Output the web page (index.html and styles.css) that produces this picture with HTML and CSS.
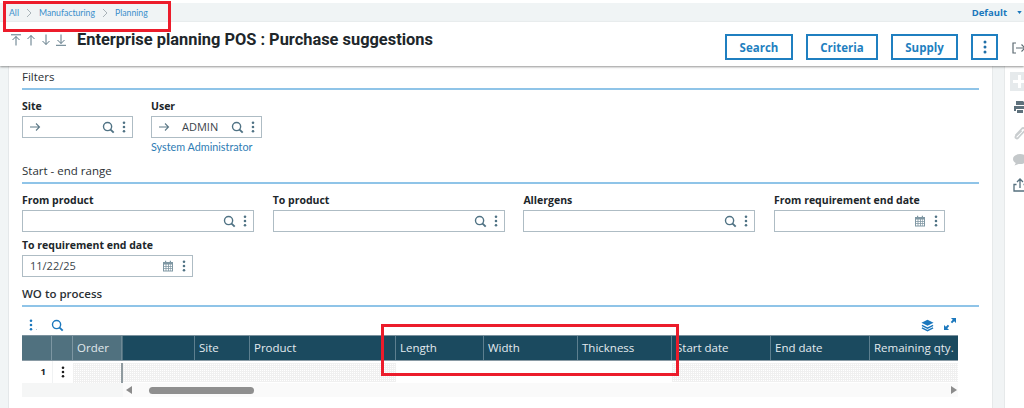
FILE: index.html
```html
<!DOCTYPE html>
<html lang="en">
<head>
<meta charset="utf-8">
<title>Enterprise planning POS : Purchase suggestions</title>
<link rel="stylesheet" href="styles.css">
</head>
<body>
<svg class="defs" width="0" height="0" aria-hidden="true">
  <symbol id="i-search" viewBox="0 0 14 14"><circle cx="6" cy="6" r="4.4" fill="none" stroke="currentColor" stroke-width="1.5"/><path d="M9.2 9.2 12.6 12.6" stroke="currentColor" stroke-width="2" fill="none"/></symbol>
  <symbol id="i-dots" viewBox="0 0 4 14"><circle cx="2" cy="2" r="1.5" fill="currentColor"/><circle cx="2" cy="7" r="1.5" fill="currentColor"/><circle cx="2" cy="12" r="1.5" fill="currentColor"/></symbol>
  <symbol id="i-arrow" viewBox="0 0 12 10"><path d="M1 5H10.5M7 1.5 10.5 5 7 8.5" fill="none" stroke="currentColor" stroke-width="1.1"/></symbol>
  <symbol id="i-cal" viewBox="0 0 12 12"><path fill="currentColor" d="M1 2h2V.8h1.2V2h3.6V.8H9V2h2v9.5H1zM2 4.6v1.4h1.6V4.6zm2.4 0v1.4H6V4.6zm2.4 0v1.4h1.6V4.6zm2.2 0v1.4H10V4.6zM2 6.8v1.4h1.6V6.8zm2.4 0v1.4H6V6.8zm2.4 0v1.4h1.6V6.8zm2.2 0v1.4H10V6.8zM2 9v1.4h1.6V9zm2.4 0v1.4H6V9zm2.4 0v1.4h1.6V9zM9 9v1.4h1V9z"/></symbol>
</svg>

<div class="topbar">
  <nav class="crumbs">
    <a>All</a>
    <svg class="chev" viewBox="0 0 6 10"><path d="M1 1 5 5 1 9" fill="none" stroke="currentColor"/></svg>
    <a>Manufacturing</a>
    <svg class="chev" viewBox="0 0 6 10"><path d="M1 1 5 5 1 9" fill="none" stroke="currentColor"/></svg>
    <a>Planning</a>
  </nav>
  <div class="default-menu"><span>Default</span><svg class="caret" viewBox="0 0 6 4"><path d="M0 0H6L3 4z" fill="currentColor"/></svg></div>
</div>

<header class="header">
  <div class="nav-arrows">
    <svg viewBox="0 0 10 12"><path d="M0 .8H10M5 11.5V2.5M1.5 6 5 2.5 8.500 6" fill="none" stroke="currentColor"/></svg>
    <svg viewBox="0 0 10 12"><path d="M5 11.500V1.500M1.500 5 5 1.500 8.500 5" fill="none" stroke="currentColor"/></svg>
    <svg viewBox="0 0 10 12"><path d="M5 .5V10.500M1.500 7 5 10.500 8.500 7" fill="none" stroke="currentColor"/></svg>
    <svg viewBox="0 0 10 12"><path d="M5 .5V9.500M1.500 6 5 9.500 8.500 6M0 11.300H10" fill="none" stroke="currentColor"/></svg>
  </div>
  <h1 class="title">Enterprise planning POS : Purchase suggestions</h1>
  <div class="actions">
    <button class="btn btn-search">Search</button>
    <button class="btn btn-criteria">Criteria</button>
    <button class="btn btn-supply">Supply</button>
    <button class="btn btn-more"><svg class="dots-btn"><use href="#i-dots"/></svg></button>
  </div>
  <svg class="exit" viewBox="0 0 14 12"><path d="M4 1H1V11H4M4 6H13M9.500 2.500 13 6 9.500 9.500" fill="none" stroke="currentColor" stroke-width="1.200"/></svg>
</header>

<div class="body-row">
  <div class="left-gutter"></div>
  <main class="content">
    <section class="section section-filters">
      <h2 class="section-title">Filters</h2>
      <div class="filter-row">
        <div class="field field-short">
          <label class="label">Site</label>
          <div class="input">
            <svg class="go"><use href="#i-arrow"/></svg>
            <span class="value"></span>
            <svg class="ic-search"><use href="#i-search"/></svg>
            <svg class="ic-dots"><use href="#i-dots"/></svg>
          </div>
        </div>
        <div class="field field-short">
          <label class="label">User</label>
          <div class="input">
            <svg class="go"><use href="#i-arrow"/></svg>
            <span class="value value-code">ADMIN</span>
            <svg class="ic-search"><use href="#i-search"/></svg>
            <svg class="ic-dots"><use href="#i-dots"/></svg>
          </div>
          <a class="sub-link">System Administrator</a>
        </div>
      </div>
    </section>

    <section class="section section-range">
      <h2 class="section-title">Start - end range</h2>
      <div class="range-grid">
        <div class="field">
          <label class="label">From product</label>
          <div class="input"><span class="value"></span><svg class="ic-search"><use href="#i-search"/></svg><svg class="ic-dots"><use href="#i-dots"/></svg></div>
        </div>
        <div class="field">
          <label class="label">To product</label>
          <div class="input"><span class="value"></span><svg class="ic-search"><use href="#i-search"/></svg><svg class="ic-dots"><use href="#i-dots"/></svg></div>
        </div>
        <div class="field">
          <label class="label">Allergens</label>
          <div class="input"><span class="value"></span><svg class="ic-search"><use href="#i-search"/></svg><svg class="ic-dots"><use href="#i-dots"/></svg></div>
        </div>
        <div class="field field-date">
          <label class="label">From requirement end date</label>
          <div class="input"><span class="value"></span><svg class="ic-cal"><use href="#i-cal"/></svg><svg class="ic-dots"><use href="#i-dots"/></svg></div>
        </div>
        <div class="field field-date">
          <label class="label">To requirement end date</label>
          <div class="input"><span class="value value-date">11/22/25</span><svg class="ic-cal"><use href="#i-cal"/></svg><svg class="ic-dots"><use href="#i-dots"/></svg></div>
        </div>
      </div>
    </section>

    <section class="section section-grid">
      <h2 class="section-title title-strong">WO to process</h2>
      <div class="grid-tools">
        <svg class="tool-dots"><use href="#i-dots"/></svg>
        <span class="tool-dot"></span>
        <svg class="tool-search"><use href="#i-search"/></svg>
        <span class="spacer"></span>
        <svg class="tool-layers" viewBox="0 0 14 13"><path fill="currentColor" d="M7 .3 13.500 3.500 7 6.700.5 3.500z"/><path d="M1 6.300 7 9.300 13 6.300M1 9 7 12 13 9" fill="none" stroke="currentColor" stroke-width="1.500"/></svg>
        <svg class="tool-expand" viewBox="0 0 13 13"><path fill="currentColor" d="M7.500 0H13V5.500L11 3.500 8.800 5.700 7.300 4.200 9.500 2zM0 7.500 2 9.500 4.200 7.300 5.700 8.800 3.500 11 5.500 13H0z"/></svg>
      </div>
      <div class="table">
        <div class="thead">
          <div class="frozen-head">
            <div class="th th-a"></div>
            <div class="th th-b"></div>
            <div class="th th-order">Order</div>
          </div>
          <div class="scroll-head">
            <div class="th"></div>
            <div class="th">Site</div>
            <div class="th">Product</div>
            <div class="th">Length</div>
            <div class="th">Width</div>
            <div class="th">Thickness</div>
            <div class="th">Start date</div>
            <div class="th">End date</div>
            <div class="th">Remaining qty.</div>
          </div>
        </div>
        <div class="trow">
          <div class="frozen-row">
            <div class="rownum">1</div>
            <div class="rowmenu"><svg class="row-dots"><use href="#i-dots"/></svg></div>
            <div class="cell-dotted"></div>
          </div>
          <div class="scroll-row">
            <div class="cells-dotted"></div>
            <div class="cells-blank"></div>
            <div class="cells-dotted"></div>
          </div>
        </div>
        <div class="tscroll">
          <div class="scroll-left-pad"></div>
          <div class="scrollbar">
            <span class="sb-left"></span>
            <span class="sb-thumb"></span>
            <span class="sb-right"></span>
          </div>
        </div>
      </div>
    </section>
  </main>
  <div class="right-gutter"></div>
  <aside class="sidebar">
    <div class="side-add"><span class="plus-h"></span><span class="plus-v"></span></div>
    <svg class="side-ic side-print" viewBox="0 0 14 14"><path fill="currentColor" d="M3 1H10L11 2V5H3zM1 6H13V11H11V9H3V11H1zM4 10H10V13H4z"/></svg>
    <svg class="side-ic side-clip" viewBox="0 0 14 14"><path d="M2.500 9.500 9 2.500C10.500 1 13 3.200 11.500 5L5 12C3.800 13.200 1.700 11.800 2.800 10.200L8.500 4.500" fill="none" stroke="currentColor" stroke-width="1.800"/></svg>
    <svg class="side-ic side-chat" viewBox="0 0 14 14"><path fill="currentColor" d="M7 2C10.800 2 14 4 14 7S10.800 12 7 12H5.500L1.500 13.500 2.800 11C1 10 0 8.600 0 7 0 4 3.200 2 7 2z"/></svg>
    <svg class="side-ic side-share" viewBox="0 0 14 14"><path d="M3.500 6.500H1V13H13V6.500H10.500M7 10V1M4 4 7 1 10 4" fill="none" stroke="currentColor" stroke-width="1.300"/></svg>
  </aside>
</div>

<div class="mark mark-crumbs"></div>
<div class="mark mark-cols"></div>
</body>
</html>
```

FILE: styles.css
```css
* { box-sizing: border-box; }
html, body { margin: 0; height: 408px; overflow: hidden; background: #fff; }
body { font-family: "Open Sans", "Liberation Sans", sans-serif; color: #1f2a30; position: relative; padding-top: 3px; }
.defs { position: absolute; }
a { color: #2a7ab5; }

.topbar { height: 19px; background: #f0f4f5; display: flex; align-items: center; justify-content: space-between; padding: 0 2px 0 9px; }
.crumbs { display: flex; align-items: center; font-family: Lato, sans-serif; font-size: 8.700px; }
.crumbs a { color: #3b8fcb; }
.chev { width: 6px; height: 10px; color: #a9b3b8; margin: 0 7px; }
.default-menu { display: flex; align-items: center; gap: 10px; color: #1c78bd; font-size: 9.500px; font-weight: 700; }
.caret { width: 5px; height: 3px; }

.header { height: 44px; display: flex; align-items: flex-start; padding: 9px 0 0 11px; position: relative; z-index: 1; box-shadow: 0 1px 2px rgba(60,60,60,.55); background: #fff; }
.nav-arrows { display: flex; gap: 5px; width: 66px; padding-top: 3px; color: #5c7785; }
.nav-arrows svg { width: 10px; height: 12px; }
.title { margin: 0; font-family: Roboto, sans-serif; font-size: 16.400px; font-weight: 700; line-height: 18px; color: #20262a; }
.actions { margin-left: auto; display: flex; gap: 13px; padding-top: 3px; margin-right: 26px; }
.btn { height: 26px; background: #fff; border: 2px solid #1f7fc0; color: #1f7fc0; font-family: "Open Sans", sans-serif; font-size: 11.500px; font-weight: 700; padding: 0; display: flex; align-items: center; justify-content: center; }
.btn-search { width: 68px; }
.btn-criteria { width: 72px; }
.btn-supply { width: 67px; }
.btn-more { width: 27px; }
.dots-btn { width: 4px; height: 14px; color: #1f6fa8; }
.exit { position: absolute; right: -2px; top: 20px; width: 14px; height: 12px; color: #5d6b72; }

.body-row { display: flex; height: 342px; }
.left-gutter { width: 9px; background: #f1f5f6; border-right: 1px solid #e4e8ea; }
.content { width: 983px; padding: 0 13px 0 13px; background: #fff; }
.right-gutter { width: 13px; background: #f1f4f5; border: solid #e6e9ea; border-width: 0 1px; }
.sidebar { flex: 1; display: flex; flex-direction: column; align-items: flex-start; padding: 6px 0 0 5px; background: #fff; overflow: hidden; }
.side-add { width: 19px; height: 19px; background: #e6eaec; position: relative; flex: none; margin-bottom: 9px; }
.plus-h { position: absolute; left: 3px; top: 8px; width: 13px; height: 3px; background: #fff; }
.plus-v { position: absolute; left: 8px; top: 3px; width: 3px; height: 13px; background: #fff; }
.side-ic { width: 14px; height: 14px; flex: none; margin: 0 0 12px 3px; }
.side-print { color: #5e717c; }
.side-clip { color: #c9cdcf; }
.side-chat { color: #c4c8ca; }
.side-share { color: #56707e; }

.section-title { margin: 0; font-size: 11.500px; font-weight: 400; line-height: 16px; color: #2b3135; border-bottom: 2px solid #8fc4e8; height: 21px; }
.title-strong { font-weight: 600; }
.section-filters { padding-top: 2px; height: 96px; }
.section-filters .section-title { height: 22px; padding-top: 1px; }
.section-range { height: 124px; padding-top: 1px; }
.section-range .section-title { padding-top: 0; height: 21px; }
.section-grid { padding-top: 0; }

.label { display: block; font-size: 10.500px; font-weight: 700; line-height: 14px; color: #20262a; }
.filter-row { display: flex; gap: 18px; padding-top: 9px; }
.field-short { width: 111px; }
.field-short .label { height: 17px; }
.input { height: 22px; border: 1px solid #aebcc4; background: #fff; display: flex; align-items: center; padding: 0 6px 0 6px; }
.value { flex: 1; font-size: 11px; line-height: 16px; color: #3a444a; }
.value-code { padding-left: 12px; }
.value-date { padding-left: 1px; }
.go { width: 12px; height: 10px; color: #5e7a88; flex: none; }
.ic-search { width: 13px; height: 13px; color: #4f7284; flex: none; margin-right: 7px; }
.ic-cal { width: 12px; height: 12px; color: #7f97a3; flex: none; margin-right: 8px; }
.ic-dots { width: 4px; height: 12px; color: #4f7284; flex: none; }
.sub-link { display: block; font-family: Lato, sans-serif; font-size: 10.800px; line-height: 14px; margin-top: 2px; color: #2e7cb4; white-space: nowrap; }

.range-grid { display: grid; grid-template-columns: 232px 232px 232px 171px; column-gap: 18.700px; row-gap: 6px; padding-top: 9px; }
.range-grid .label { height: 14px; margin-bottom: 3px; }
.field-date { width: 171px; }

.grid-tools { display: flex; align-items: center; height: 20px; margin-top: 8px; padding: 0 23px 0 7px; }
.tool-dots { width: 4px; height: 12px; color: #1c78bd; }
.tool-dot { width: 1px; height: 1px; background: #b5c9d6; margin: 8px 0 0 3px; }
.tool-search { width: 13px; height: 13px; color: #1c78bd; margin-left: 14px; }
.spacer { flex: 1; }
.tool-layers { width: 13px; height: 13px; color: #1c78bd; }
.tool-expand { width: 12px; height: 12px; color: #1c78bd; margin: -3px 0 0 10px; }

.table { width: 936px; }
.thead { display: flex; height: 26px; }
.frozen-head { width: 101px; display: grid; grid-template-columns: 30px 21px 49px; background: #50717f; }
.scroll-head { flex: 1; display: grid; grid-template-columns: 72px 55px 146px 88px 94px 94px 99px 99px 88px; background: #1b4a5f; }
.frozen-head, .scroll-head { border-top: 1px solid #7b929e; border-bottom: 1px solid #8a9ba5; }
.th { color: #e3ebef; font-size: 11.500px; line-height: 24px; padding-left: 4px; border-right: 1px solid #5d7f8f; white-space: nowrap; }
.scroll-head .th:last-child { border-right: 0; }
.th-a, .th-b { border-right-color: #7d96a2; }
.th-order { color: #e1e8ec; border-right-color: #6e8995; }

.trow { display: flex; height: 22px; }
.frozen-row { width: 101px; display: grid; grid-template-columns: 30px 21px 50px; }
.rownum { font-size: 9.500px; font-weight: 700; line-height: 22px; text-align: right; padding-right: 6px; color: #20262a; }
.rowmenu { display: flex; align-items: center; justify-content: center; border-left: 1px solid #f0f2f3; }
.row-dots { width: 4px; height: 12px; color: #1c1c1c; }
.cell-dotted, .cells-dotted { background-color: #fff; background-image: linear-gradient(#f0f0f0 1px, transparent 1px), linear-gradient(90deg, #f0f0f0 1px, transparent 1px); background-size: 2px 2px; margin-top: 2px; margin-bottom: 1px; }
.cell-dotted { border-right: 2px solid #8f9a9f; margin-bottom: 0; }
.scroll-row { flex: 1; display: grid; grid-template-columns: 273px 276px 286px; }

.tscroll { display: flex; height: 14px; }
.scroll-left-pad { width: 101px; background: #f5f6f6; }
.scrollbar { flex: 1; background: #fafafa; display: flex; align-items: center; padding: 0 1px 0 3px; }
.sb-left { width: 0; height: 0; border: solid transparent; border-width: 4px 6px 4px 0; border-right-color: #8c8c8c; }
.sb-thumb { width: 105px; height: 7px; border-radius: 4px; background: #8f8f8f; margin-left: 17px; }
.sb-right { width: 0; height: 0; margin-left: auto; border: solid transparent; border-width: 4px 0 4px 6px; border-left-color: #8c8c8c; }

.mark { position: absolute; border: 3px solid #ec1c2b; z-index: 5; pointer-events: none; }
.mark-crumbs { left: 3px; top: 1px; width: 168px; height: 31px; }
.mark-cols { left: 381px; top: 324px; width: 298px; height: 52px; }
```
